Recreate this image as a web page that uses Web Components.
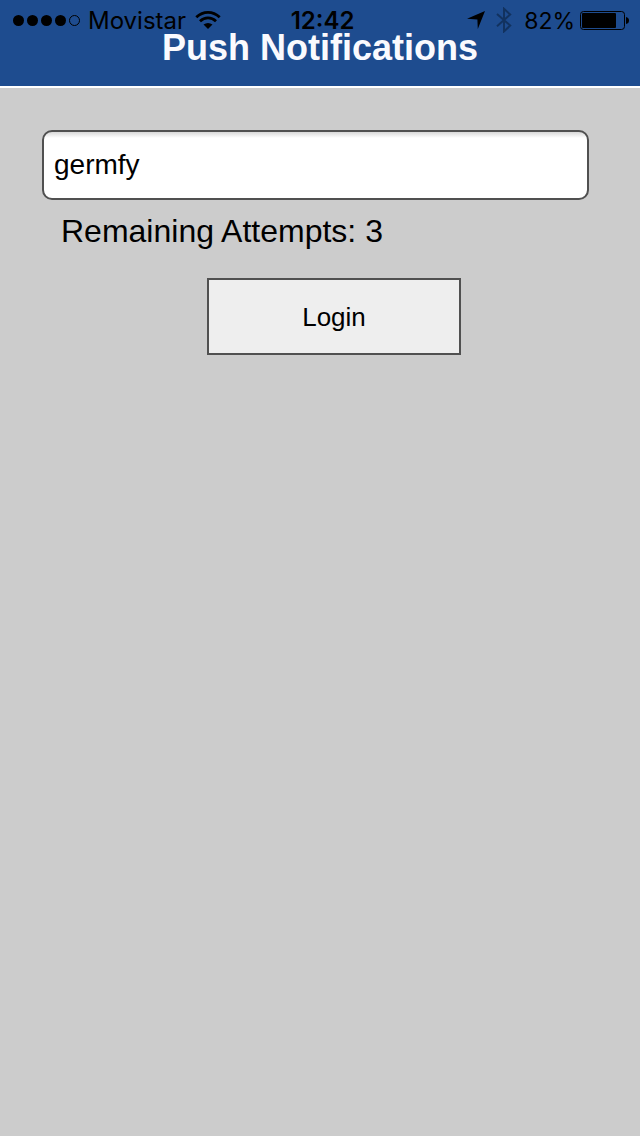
<!DOCTYPE html>
<html lang="en">
<head>
<meta charset="utf-8">
<meta name="viewport" content="width=device-width, initial-scale=1">
<title>Push Notifications</title>
<style>
html, body { margin: 0; min-height: 100%; background: #ccc; }
body { font-family: "Liberation Sans", Arial, sans-serif; color: #000; }
</style>
</head>
<body>
<push-app></push-app>
<script>
const define = (name, html) => customElements.define(name, class extends HTMLElement {
  constructor() {
    super();
    this.attachShadow({ mode: "open" }).innerHTML = html;
  }
});

define("signal-dots", `
<style>:host { display: block; } svg { display: block; }</style>
<svg width="68" height="12" viewBox="0 0 68 12" aria-hidden="true">
  <circle cx="5.5" cy="6.5" r="5.5"/><circle cx="19.5" cy="6.5" r="5.5"/>
  <circle cx="33.5" cy="6.5" r="5.5"/><circle cx="47.5" cy="6.5" r="5.5"/>
  <circle cx="61.5" cy="6.5" r="5" fill="none" stroke="#000"/>
</svg>`);

define("wifi-icon", `
<style>:host { display: block; } svg { display: block; }</style>
<svg width="26" height="18" viewBox="0 0 26 18" aria-hidden="true">
  <path d="M1.3 6.3Q6.5 1.4 13 1.4T24.7 6.3M5 10.2Q8.5 6.9 13 6.9T21 10.2" fill="none" stroke="#000" stroke-width="2.8"/>
  <path d="M8.5 13.5Q13 10.3 17.5 13.5L13 18z"/>
</svg>`);

define("location-icon", `
<style>:host { display: block; } svg { display: block; }</style>
<svg width="18" height="18" viewBox="0 0 18 18" aria-hidden="true"><path d="M18 0L10.8 18L10.4 8.6L0 7.8z"/></svg>`);

define("bluetooth-icon", `
<style>:host { display: block; } svg { display: block; }</style>
<svg width="16" height="26" viewBox="0 0 16 26" aria-hidden="true">
  <path d="M1 7L14.2 18.6L8 24.4V1.8L14.2 7.6L1 19.2" fill="none" stroke="#12325f" stroke-width="2"/>
</svg>`);

define("battery-icon", `
<style>:host { display: block; } svg { display: block; }</style>
<svg width="49" height="19" viewBox="0 0 49 19" aria-hidden="true">
  <rect x=".5" y=".5" width="44" height="18" rx="3" fill="none" stroke="#000"/>
  <rect x="2" y="2" width="34" height="15" rx="1"/>
  <path d="M46 6Q49 6.5 49 9.5T46 13z"/>
</svg>`);

define("status-bar", `
<style>
:host { display: grid; grid-template-columns: 1fr auto 1fr; align-items: center; height: 40px; padding: 0 11px 0 13px; box-sizing: border-box; font: 400 24px/24px Inter, sans-serif; }
.left, .right { display: flex; align-items: center; }
.left { gap: 7px; }
.right { justify-content: flex-end; gap: 5px; }
span { padding-top: 2px; }
.time { font-weight: 600; padding-left: 3px; }
.level { font-size: 23px; }
wifi-icon { margin-left: 2px; }
bluetooth-icon { margin: 0 7px 0 6px; }
</style>
<div class="left"><signal-dots></signal-dots><span>Movistar</span><wifi-icon></wifi-icon></div>
<span class="time">12:42</span>
<div class="right"><location-icon></location-icon><bluetooth-icon></bluetooth-icon><span class="level">82%</span><battery-icon></battery-icon></div>`);

define("app-header", `
<style>
:host { display: block; position: relative; background: #1e4c8f; border-bottom: 2px solid #fff; }
h1 { margin: 0; padding: 30px 0 20px; font-size: 36px; line-height: 36px; font-weight: 700; text-align: center; color: #fafafe; }
status-bar { position: absolute; top: 0; left: 0; right: 0; }
</style>
<h1><slot></slot></h1>
<status-bar></status-bar>`);

define("login-form", `
<style>
:host { display: block; padding: 42px 14px 42px 42px; }
form { display: flex; flex-direction: column; }
input, button { box-sizing: border-box; border: 2px solid #505050; color: #000; font-family: inherit; margin: 0; }
input { height: 70px; margin-right: 37px; padding: 0 10px; border-radius: 10px; background: linear-gradient(#d8d8d8, #fff 6px); font-size: 28px; outline: 0; }
p { margin: 11px 0 0 19px; font-size: 32px; line-height: 40px; }
button { align-self: center; width: 254px; height: 77px; margin-top: 27px; padding: 2px 0 0; border-radius: 0; background: #eee; font-size: 26px; }
</style>
<form>
  <input type="text" aria-label="User name" value="germfy" spellcheck="false">
  <p>Remaining Attempts: 3</p>
  <button type="button">Login</button>
</form>`);

define("push-app", `
<style>:host { display: block; min-height: 100vh; background: #ccc; }</style>
<app-header>Push Notifications</app-header>
<main><login-form></login-form></main>`);
</script>
</body>
</html>
